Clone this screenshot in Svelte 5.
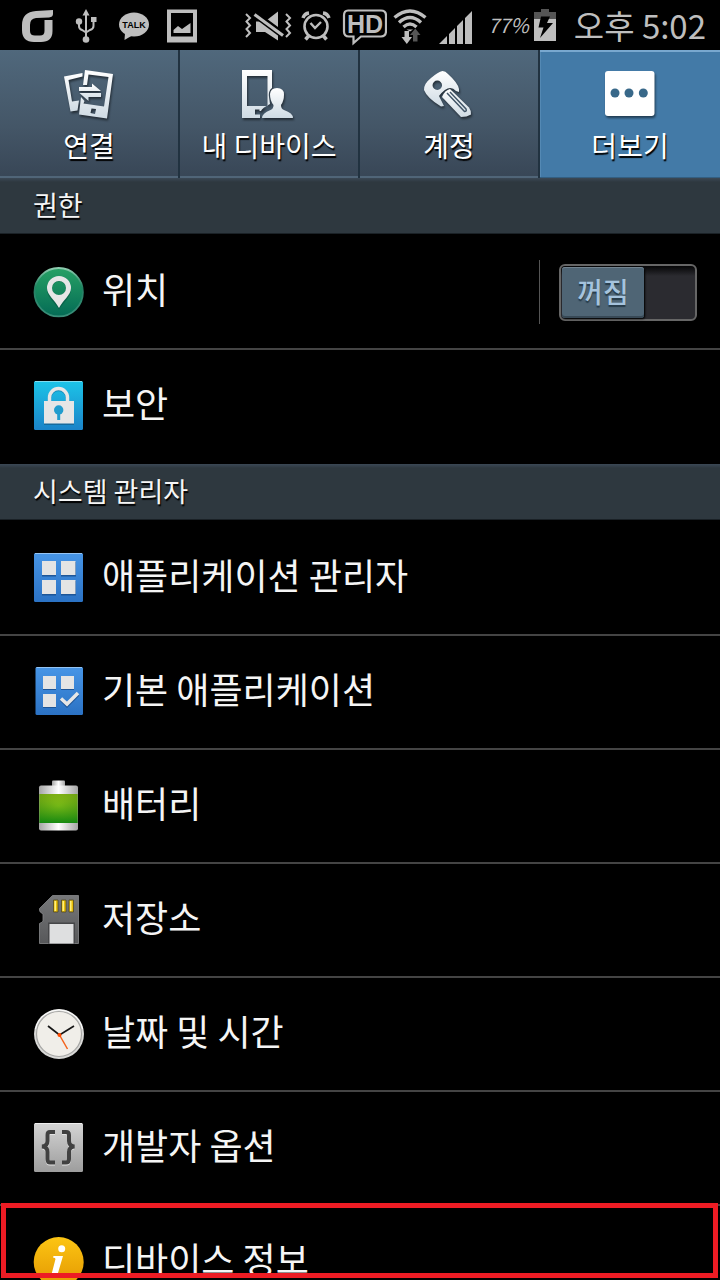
<script>
  let locationOn = $state(false);
  let activeTab = $state('more');

  const tabs = [
    { id: 'connect', label: '연결', box: '59 66 60 56' },
    { id: 'device', label: '내 디바이스', box: '239 66 60 56' },
    { id: 'account', label: '계정', box: '419 66 60 56' },
    { id: 'more', label: '더보기', box: '600 66 60 56' }
  ];

  const sections = [
    {
      title: '권한',
      rows: [
        { id: 'location', label: '위치', toggle: true },
        { id: 'security', label: '보안' }
      ]
    },
    {
      title: '시스템 관리자',
      rows: [
        { id: 'apps', label: '애플리케이션 관리자' },
        { id: 'defaults', label: '기본 애플리케이션' },
        { id: 'battery', label: '배터리' },
        { id: 'storage', label: '저장소' },
        { id: 'clock', label: '날짜 및 시간' },
        { id: 'developer', label: '개발자 옵션' },
        { id: 'info', label: '디바이스 정보', marked: true }
      ]
    }
  ];
</script>

<svg class="defs" aria-hidden="true">
  <defs>
    <linearGradient id="silver" x1="0" y1="0" x2="0" y2="1"><stop offset="0" stop-color="#fff" /><stop offset="1" stop-color="#cfdbe4" /></linearGradient>
    <linearGradient id="green" x1="0" y1="0" x2="0" y2="1"><stop offset="0" stop-color="#27a165" /><stop offset="1" stop-color="#046b55" /></linearGradient>
    <linearGradient id="greenRim" x1="0" y1="0" x2="0" y2="1"><stop offset="0" stop-color="#8fcdb0" /><stop offset=".4" stop-color="#238062" /><stop offset="1" stop-color="#3a8f7a" /></linearGradient>
    <linearGradient id="cyan" x1="0" y1="0" x2="0" y2="1"><stop offset="0" stop-color="#1cc4e8" /><stop offset="1" stop-color="#1b83c8" /></linearGradient>
    <linearGradient id="blue" x1="0" y1="0" x2="0" y2="1"><stop offset="0" stop-color="#4795e6" /><stop offset="1" stop-color="#2b72c4" /></linearGradient>
    <linearGradient id="metal" x1="0" y1="0" x2="1" y2="0"><stop offset="0" stop-color="#a5a5a5" /><stop offset=".5" stop-color="#fff" /><stop offset="1" stop-color="#a5a5a5" /></linearGradient>
    <radialGradient id="charge" cx=".5" cy=".4" r=".75"><stop offset="0" stop-color="#8fc814" /><stop offset="1" stop-color="#2f7408" /></radialGradient>
    <linearGradient id="chargeDeep" x1="0" y1="0" x2="0" y2="1"><stop offset="0" stop-color="#9ec31a" stop-opacity=".5" /><stop offset="1" stop-color="#0d8c13" stop-opacity=".8" /></linearGradient>
    <linearGradient id="card" x1="0" y1="0" x2="0" y2="1"><stop offset="0" stop-color="#77787a" /><stop offset="1" stop-color="#57585a" /></linearGradient>
    <linearGradient id="grey" x1="0" y1="0" x2="0" y2="1"><stop offset="0" stop-color="#d4d4d4" /><stop offset="1" stop-color="#9d9d9d" /></linearGradient>
    <linearGradient id="gold" x1="0" y1="0" x2="0" y2="1"><stop offset="0" stop-color="#fcc514" /><stop offset="1" stop-color="#e39700" /></linearGradient>
  </defs>
</svg>

<div class="screen">
  <header class="status">
    <div class="group notices">
      <svg width="32" height="50" viewBox="22 0 32 50" aria-hidden="true">
        <path fill="#bebebe" d="M53 10L36 11Q22 12 22 25V30Q22 42 34 42H41Q52.500 42 52.500 31V20H44.500V31Q44.500 35.500 40 35.500H35Q30 35.500 30 31V25Q30 18.500 36 18L49 17.500Q53 17 53 14Z" />
      </svg>
      <svg width="29" height="50" viewBox="72 0 29 50" aria-hidden="true">
        <g fill="none" stroke="#bebebe" stroke-width="2"><path d="M86 13V38M79 22V26Q79 29 82 30L86 32.500M93.500 21V26Q93.500 29 90 30L86 32.500" /></g>
        <path fill="#bebebe" d="M86 9L89.500 15.500H82.500ZM91 17h5.500v5h-5.500z" /><circle cx="79" cy="21.500" r="3.200" fill="#bebebe" /><circle cx="86" cy="39.500" r="3.300" fill="#bebebe" />
      </svg>
      <svg width="30" height="50" viewBox="119 0 30 50" role="img" aria-label="TALK">
        <ellipse cx="134" cy="24.500" rx="15" ry="12" fill="#bebebe" /><path fill="#bebebe" d="M125 33L124.500 40L133 35Z" />
        <text x="134" y="28" text-anchor="middle" font-family="Liberation Sans, sans-serif" font-weight="700" font-size="9" fill="#000">TALK</text>
      </svg>
      <svg width="30" height="50" viewBox="167 0 30 50" aria-hidden="true">
        <path fill="#bebebe" fill-rule="evenodd" d="M167 9.500h30v33h-30zM171 13v23.500h22v-23.500z" />
        <path fill="#bebebe" d="M173.500 33V30L178 26L182 29L190.500 23V33Z" />
      </svg>
    </div>
    <div class="group signals">
      <svg width="49" height="50" viewBox="245 0 49 50" aria-hidden="true">
        <path fill="#bebebe" d="M256 21.500H265L278 11.500V40.500L265 32H256Z" />
        <path stroke="#000" stroke-width="7" d="M256 15L283 35" /><path stroke="#bebebe" stroke-width="3.200" d="M254.500 14.500L283 35.500" />
        <path fill="none" stroke="#bebebe" stroke-width="2" d="M246 14L250 18L246.500 21.500L250 25.500L246.500 29L250 33L246 37M286 14L290 18L286.500 21.500L290 25.500L286.500 29L290 33L286 37" />
      </svg>
      <svg width="33" height="50" viewBox="300 0 33 50" aria-hidden="true">
        <circle cx="316" cy="26.500" r="11.500" fill="none" stroke="#bebebe" stroke-width="2.600" /><path fill="none" stroke="#bebebe" stroke-width="2.400" d="M310.500 23L315 28L321 22" />
        <path fill="none" stroke="#bebebe" stroke-width="3.500" d="M303 18Q304.500 13.500 309 13M323 13Q327.500 13.500 329 18M308.500 36L305.500 39.500M323.500 36L326.500 39.500" />
      </svg>
      <svg width="48" height="50" viewBox="339 0 48 50" role="img" aria-label="HD">
        <path fill="none" stroke="#bebebe" stroke-width="2.200" d="M348 10.500H381Q386 10.500 386 15.500V31Q386 36.500 381 36.500H361L353.500 43V36.500H349Q344 36.500 344 31.500V15.500Q344 10.500 348 10.500Z" />
        <text x="365" y="32.500" text-anchor="middle" font-family="Liberation Sans, sans-serif" font-weight="700" font-size="25" fill="#bebebe">HD</text>
      </svg>
      <svg width="35" height="50" viewBox="393 0 35 50" aria-hidden="true">
        <g fill="none" stroke="#bebebe" stroke-width="3.400"><path d="M394.500 17.500Q410 4.500 425.500 17.500M399 22.500Q410 12.500 421 22.500M403.500 27Q410 21 416.500 27" /></g>
        <path fill="#bebebe" d="M406.500 29.500H413L410 31.500ZM404.500 31h4.500v6h3l-5.200 7l-5.300-7h3z" /><path fill="#555" d="M413 41.500h4.500v-6.500h3l-5.200-6.500l-5.300 6.500h3z" />
      </svg>
      <svg width="39" height="50" viewBox="434 0 39 50" aria-hidden="true">
        <path fill="#bebebe" d="M439 44L447 36V44ZM449 34L455 28V44H449ZM457 26L463 20V44H457ZM465 18L472 11V44H465Z" />
      </svg>
    </div>
    <span class="percent">77%</span>
    <svg class="cell" width="22" height="50" viewBox="534 0 22 50" aria-hidden="true">
      <path fill="#555" d="M541 9h8v3h7v7h-22v-7h7z" /><path fill="#bebebe" d="M534 19h22v22h-22z" />
      <path fill="#000" d="M541 16.500h9l-3 6.500h6L540 38l3.500-10.500h-5z" />
    </svg>
    <time class="time">오후 5:02</time>
  </header>

  <nav class="tabs" aria-label="설정">
    {#each tabs as tab}
      <button class="tab" class:active={activeTab === tab.id} onclick={() => (activeTab = tab.id)}>
        <svg class="tab-icon" width="60" height="56" viewBox={tab.box} aria-hidden="true">
          {#if tab.id === 'connect'}
            <path fill="url(#silver)" fill-rule="evenodd" d="M64 76.500L82.500 73V76.500L68.500 80L72 101.500L79 100.500L77.500 110.500L70.500 111.500Z" />
            <path fill="url(#silver)" fill-rule="evenodd" d="M85 70L113 74L107 118.500L79 114.500L81 97L84.500 101L83.500 103.500L104 106.500L108.500 77L88.500 74.500L87 85H83ZM91.500 108.500L90.500 113L95 114L96 109Z" />
            <path fill="url(#silver)" d="M79 87H92V83.500L101 91H79ZM101 93H79.500L88.500 101V97H101Z" />
          {:else if tab.id === 'device'}
            <path fill="url(#silver)" fill-rule="evenodd" d="M242 70H272V88Q268 91 269 97L270 104Q262 108 261 111H259.500V109.500H255V114.500H260V118H242ZM247 76V106H267.500V76Z" />
            <path fill="url(#silver)" d="M262 118Q262 113.500 270.500 110Q273.500 109 273.500 105Q270 101 270 94Q270.500 88 277 88Q284 88 284 94.500Q284 101 281 105Q281 109 284 110Q293 113 293 118Z" />
          {:else if tab.id === 'account'}
            <path fill="url(#silver)" fill-rule="evenodd" d="M442.500 71Q445.500 71 448 74Q458 83 459 89V92L456 91Q449 83 439 96L444 106L441 106.500Q427 98 424 90Q423.500 84 431 78Q438 72 442.500 71ZM437.300 80.500A4.700 4.700 0 1 0 437.300 90A4.700 4.700 0 1 0 437.300 80.500Z" />
            <path fill="url(#silver)" d="M442 97Q445 90 450 89L469 107.500Q471 110 471 114.500Q467 117 461 117Z" />
            <path fill="none" stroke="#425668" stroke-width="1.500" d="M447 93L464.500 111.500Q467 111.500 466 109L450 92" />
          {:else}
            <rect x="605" y="71" width="49.500" height="45" rx="3" fill="#fff" />
            <g fill="#386889"><circle cx="615" cy="93" r="4.500" /><circle cx="629" cy="93" r="4.500" /><circle cx="643.300" cy="93" r="4.500" /></g>
          {/if}
        </svg>
        <span class="tab-label">{tab.label}</span>
      </button>
    {/each}
  </nav>

  <main>
    {#each sections as section}
      <section>
        <h2>{section.title}</h2>
        <ul>
          {#each section.rows as row}
            <li class:marked={row.marked}>
              <button class="row">
                <svg class="icon" width="52" height="52" viewBox="0 0 52 52" aria-hidden="true">
                  {#if row.id === 'location'}
                    <circle cx="25.700" cy="26.200" r="24.200" fill="url(#green)" stroke="url(#greenRim)" stroke-width="1.800" />
                    <path fill="#064b3c" opacity=".5" fill-rule="evenodd" d="M26 11.500A12 12 0 0 0 14 23.500C14 31 22 37 26 43.500C30 37 38 31 38 23.500A12 12 0 0 0 26 11.500ZM26 15.500a7 7 0 1 1 0 14a7 7 0 1 1 0-14Z" />
                    <path fill="#e6e6e6" fill-rule="evenodd" d="M26 10A12 12 0 0 0 14 22C14 29 22 34 26 42C30 34 38 29 38 22A12 12 0 0 0 26 10ZM26 15a7 7 0 1 1 0 14a7 7 0 1 1 0-14Z" />
                  {:else if row.id === 'security'}
                    <rect x="1" y="1" width="49" height="49" rx="1.500" fill="url(#cyan)" /><path stroke="#80dcf0" d="M2 1.500H49" />
                    <path fill="none" stroke="#156d9e" opacity=".6" stroke-width="3.500" d="M16.500 22V18.500a9 9 0 0 1 18 0V22" />
                    <path fill="none" stroke="#e6e6e6" stroke-width="3.500" d="M16.500 22V17.500a9 9 0 0 1 18 0V22" /><path fill="#176b9e" d="M11 43h30v2h-30z" /><path fill="#e6e6e6" d="M11 21h30v22.500h-30z" />
                    <circle cx="25.700" cy="30" r="4.700" fill="#219dce" /><path fill="#219dce" d="M24.200 33h3v7h-3z" />
                  {:else if row.id === 'apps'}
                    <rect x="1" y="1" width="49" height="49" rx="1.500" fill="url(#blue)" /><path stroke="#94c4f4" d="M2 1.500H49" />
                    <path fill="#1e5698" d="M9 10h14v14.500h-14zM28 10h15v14.500h-15zM9 29h14v14.500h-14zM28 29h15v14.500h-15z" />
                    <path fill="#e4e4e4" d="M9 9h14v14h-14zM28 9h14.500v14h-14.500zM9 28h14v14h-14zM28 28h14.500v14h-14.500z" />
                  {:else if row.id === 'defaults'}
                    <rect x="2.500" y="1" width="47.500" height="48" rx="1.500" fill="url(#blue)" /><path stroke="#94c4f4" d="M3.500 1.500H49" />
                    <path fill="#1e5698" d="M10 11h13v13h-13zM28 11h13v13h-13zM10 29h13v13h-13z" />
                    <path fill="#e4e4e4" d="M10 10h13v13h-13zM28 10h13v13h-13zM10 28h13v13h-13z" />
                    <path fill="none" stroke="#1e5698" stroke-width="3.500" d="M28 33.500L34 39.500L45 28.500" /><path fill="none" stroke="#e6e6e6" stroke-width="3.500" d="M28 32.500L34 38L45 27" />
                  {:else if row.id === 'battery'}
                    <rect x="19" y=".5" width="13" height="6" rx="1" fill="url(#metal)" /><rect x="6" y="5.500" width="39" height="45" rx="2" fill="url(#metal)" />
                    <path fill="url(#charge)" d="M6.500 14h38v29h-38z" /><path fill="url(#chargeDeep)" d="M6.500 14h38v29h-38z" />
                  {:else if row.id === 'storage'}
                    <path fill="url(#card)" stroke="#88898b" stroke-width=".8" d="M19.500 1.500H45.500V49.500H6.500V29.500Q10 28 10 27V20Q6.500 18 6.500 16.500V14.500Z" />
                    <path fill="#e8bd08" stroke="#514922" stroke-width=".8" d="M20.500 6h4.500v12h-4.500zM28.500 6h4.500v12h-4.500zM36 6h4.500v12h-4.500z" />
                    <path fill="#fff07c" d="M21.500 7h1.500v10h-1.500zM29.500 7h1.500v10h-1.500zM37 7h1.500v10h-1.500z" />
                    <path fill="#464749" d="M15 28.500h27v21h-27z" /><path fill="#dedfe0" d="M16.500 30h24v19.500h-24z" />
                  {:else if row.id === 'clock'}
                    <circle cx="26" cy="26" r="25" fill="#d9d9d7" /><circle cx="26" cy="26" r="22.500" fill="#f0eee9" stroke="#a7a7a5" stroke-width="1.200" />
                    <path fill="none" stroke="#fff" d="M2.500 21A24 24 0 0 1 49.500 21" /><path fill="none" stroke="#161616" stroke-width="1.700" d="M15 18L26.500 27L41 18" />
                    <path stroke="#f3621b" stroke-width="1.500" d="M26.500 27L34.500 41" /><circle cx="26.500" cy="27" r="2" fill="#ff4c00" />
                  {:else if row.id === 'developer'}
                    <rect x="1" y="1" width="49" height="49" rx="1.500" fill="url(#grey)" /><path stroke="#eee" d="M2 1.500H49" />
                    <path fill="none" stroke="#e4e4e4" stroke-width="4" d="M22 11H17Q14.500 11 14.500 14V20Q14.500 25 9.500 25.500Q14.500 26 14.500 31V38Q14.500 41.500 17 41.500H22M29 11H33Q36 11 36 14V20Q36 25 41 25.500Q36 26 36 31V38Q36 41.500 33 41.500H29" />
                    <path fill="none" stroke="#414141" stroke-width="4" d="M22 10H17Q14.500 10 14.500 13V19Q14.500 24 9 24.500Q14.500 25 14.500 30V37Q14.500 40.500 17 40.500H22M29 10H33Q36 10 36 13V19Q36 24 41.500 24.500Q36 25 36 30V37Q36 40.500 33 40.500H29" />
                  {:else}
                    <circle cx="25.700" cy="26" r="25" fill="url(#gold)" /><circle cx="28.700" cy="12.700" r="3.500" fill="#fff" />
                    <path fill="#fff" d="M20.500 20H30L25 37Q24.500 39.500 29 37.500Q25 42.500 20.500 42Q17.500 41 19 36.500L22.500 23Q22.500 21.500 20 21.500Z" />
                  {/if}
                </svg>
                <span class="label">{row.label}</span>
              </button>
              {#if row.toggle}
                <div class="toggle-wrap">
                  <button class="toggle" class:on={locationOn} role="switch" aria-checked={locationOn} aria-label="위치" onclick={() => (locationOn = !locationOn)}>
                    <span class="thumb">{locationOn ? '켜짐' : '꺼짐'}</span>
                  </button>
                </div>
              {/if}
            </li>
          {/each}
        </ul>
      </section>
    {/each}
  </main>
</div>

<style>
  :global(body) { background: #000; }
  *, .marked::after { box-sizing: border-box; }
  .defs { position: absolute; width: 0; height: 0; }
  .screen {
    height: 100vh;
    overflow: hidden;
    display: flex;
    flex-direction: column;
    background: #000;
    color: #f5f5f5;
    font-family: "Noto Sans CJK KR", sans-serif;
  }
  svg { display: block; flex: none; }
  button { border: 0; margin: 0; padding: 0; background: none; color: inherit; font: inherit; cursor: pointer; }

  .status { flex: none; display: flex; align-items: center; height: 50px; padding: 0 14px 0 22px; color: #bebebe; white-space: nowrap; }
  .group { display: flex; }
  .notices { gap: 18px; }
  .signals { gap: 6px; margin-left: 48px; }
  .percent { margin-left: 15px; font-size: 20px; line-height: 50px; font-style: italic; }
  .cell { margin-left: 5px; }
  .time { margin-left: auto; font-size: 33px; line-height: 50px; }

  .tabs { flex: none; display: grid; grid-template-columns: repeat(4, 1fr); }
  .tab {
    display: flex;
    flex-direction: column;
    align-items: center;
    height: 128px;
    padding-top: 16px;
    border-right: 2px solid #213240;
    background: linear-gradient(#50687c, #445667 60%, #384656);
    box-shadow: inset 0 -2px #506578;
    color: #fff;
  }
  .tab:last-child { border-right: 0; }
  .tab.active { background: #437aa7; box-shadow: inset 0 2px #79a8cf, inset 0 -1px #335f82, inset 1px 0 #5489b4; }
  .tab-icon { filter: drop-shadow(1px 2px 1px rgba(0, 0, 0, 0.5)); }
  .tab-label { font-size: 28px; line-height: 46px; text-shadow: 1px 2px 1px #000; white-space: nowrap; }

  main { flex: none; }
  h2 {
    margin: 0;
    height: 56px;
    padding: 0 33px;
    background: linear-gradient(#3b4855, #2e383f 4px);
    border-bottom: 1px solid #1a2126;
    font-size: 27px;
    font-weight: 400;
    line-height: 54px;
    text-shadow: 1px 2px 1px #000;
  }
  ul { list-style: none; margin: 0; padding: 2px 0 0; }
  li { position: relative; display: flex; height: 114px; border-bottom: 2px solid #444; }
  li:last-child { border-bottom-color: transparent; }
  .row { flex: 1; display: flex; align-items: center; gap: 17px; padding-left: 33px; font-size: 36px; line-height: 52px; text-align: left; }
  .label { padding-bottom: 8px; }
  .marked::after { content: ""; position: absolute; top: -3px; left: 1px; right: 2px; height: 75px; border: 5px solid #ed1c24; pointer-events: none; }

  .toggle-wrap { align-self: center; display: flex; align-items: center; height: 64px; padding: 0 23px 0 19px; border-left: 1px solid #555; }
  .toggle {
    display: flex;
    width: 138px;
    height: 57px;
    padding: 1px;
    border: 2px solid #666;
    border-radius: 6px;
    background: linear-gradient(#050506, #2b2b30 10px);
  }
  .toggle.on { justify-content: flex-end; }
  .thumb {
    width: 82px;
    height: 51px;
    border-radius: 3px;
    background: #4f6575;
    box-shadow: inset 0 1px #71828f, inset 0 -2px #384956, 1px 1px 2px #000;
    color: #a5c3dd;
    font-size: 28px;
    font-weight: 500;
    line-height: 48px;
    text-align: center;
    text-shadow: 0 2px 1px #263b4a;
  }
</style>
